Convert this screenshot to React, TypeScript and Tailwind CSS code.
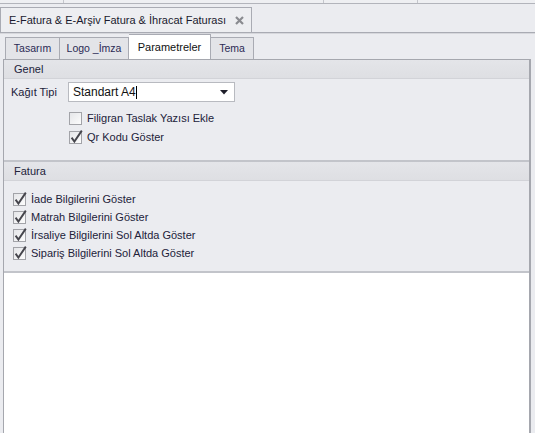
import React from "react";

function Check({ checked }: { checked?: boolean }) {
    return (
        <svg width="15" height="15" viewBox="0 0 15 15" className="shrink-0">
            <defs>
                <linearGradient id="cbg" x1="0" y1="0" x2="1" y2="1">
                    <stop offset="0" stopColor="#e4e5e8" />
                    <stop offset="1" stopColor="#fdfdfd" />
                </linearGradient>
            </defs>
            <rect x="0.5" y="1.5" width="12" height="12" fill="url(#cbg)" stroke="#a2a3a8" />
            {checked && (
                <path d="M2.6 7.6 L5.4 11.6 L12.8 0.6" fill="none" stroke="#45454c" strokeWidth="1.9" strokeLinejoin="miter" />
            )}
        </svg>
    );
}

function Row({ label, checked }: { label: string; checked?: boolean }) {
    return (
        <div className="flex items-center gap-[3px] h-[18px]">
            <Check checked={checked} />
            <span>{label}</span>
        </div>
    );
}

function GroupHeader({ title }: { title: string }) {
    return (
        <div className="h-[19px] flex items-center pl-[10px] bg-gradient-to-b from-[#e4e5e9] to-[#dedfe3] border-b border-[#d2d3d8]">
            {title}
        </div>
    );
}

export default function App() {
    return (
        <div
            className="w-[535px] h-[433px] overflow-hidden bg-[#ebecf0] text-[11px] text-[#22223a] flex flex-col"
            style={{ fontFamily: '"Liberation Sans", Arial, sans-serif' }}
        >
            {/* top strip left over from the toolbar above */}
            <div className="h-[4px] flex border-b border-[#b2b4bb] bg-[#eeeff2] shrink-0">
                <div className="w-[64px] border-r border-[#c4c6cc]" />
                <div className="w-[260px] border-r border-[#c4c6cc]" />
                <div className="w-[94px] border-r border-[#c4c6cc]" />
            </div>

            {/* document tab */}
            <div className="h-[29px] flex items-end border-b border-[#a9abb3] shrink-0">
                <div className="w-[252px] h-[25px] border border-b-0 border-[#a9abb3] bg-[#edeef1] flex items-center justify-between pl-[8px] pr-[7px]">
                    <span className="text-[#1a1a2e]">E-Fatura &amp; E-Arşiv Fatura &amp; İhracat Faturası</span>
                    <svg width="9" height="9" viewBox="0 0 9 9">
                        <path d="M1 1 L8 8 M8 1 L1 8" stroke="#8a8b90" strokeWidth="2.2" />
                    </svg>
                </div>
            </div>
            <div className="h-px bg-[#d6d7dc] shrink-0" />

            <div className="flex-1 flex flex-col pl-[3px] pr-[4px]">
                {/* inner tabs */}
                <div className="h-[25px] flex items-end pl-[2px] shrink-0">
                    <div className="h-[22px] w-[55px] border border-b-0 border-[#a9abb3] bg-[#e3e4e8] flex items-center justify-center text-[10.5px] text-[#2b2b55]">
                        Tasarım
                    </div>
                    <div className="h-[22px] w-[69px] border border-b-0 border-l-0 border-[#a9abb3] bg-[#e3e4e8] flex items-center justify-center text-[10.5px] text-[#2b2b55]">
                        Logo _İmza
                    </div>
                    <div className="h-[25px] w-[82px] border border-b-0 border-l-0 border-[#a9abb3] bg-white flex items-center justify-center text-[11px] text-[#111]">
                        Parametreler
                    </div>
                    <div className="h-[22px] w-[43px] border border-b-0 border-l-0 border-[#a9abb3] bg-[#e3e4e8] flex items-center justify-center text-[10.5px] text-[#2b2b55]">
                        Tema
                    </div>
                </div>

                {/* panel */}
                <div className="flex-1 bg-white border-l border-r-2 border-t border-[#a5a7ae] flex flex-col">
                    {/* Genel */}
                    <div className="h-[102px] bg-[#ebecf0] border-b-2 border-[#c2c4ca] flex flex-col">
                        <GroupHeader title="Genel" />
                        <div className="flex items-center mt-[3px] pl-[7px]">
                            <span className="w-[57px]">Kağıt Tipi</span>
                            <div className="w-[167px] h-[20px] bg-white border border-[#b8bac0] flex items-center justify-between pl-[4px] pr-[6px] text-[12px] text-[#111]">
                                <span>
                                    Standart A4<span className="inline-block w-px h-[13px] bg-black align-middle" />
                                </span>
                                <svg width="8" height="5" viewBox="0 0 8 5">
                                    <path d="M0 0 H8 L4 4.5 Z" fill="#1e1e2a" />
                                </svg>
                            </div>
                        </div>
                        <div className="flex flex-col pl-[65px] mt-[7px]">
                            <Row label="Filigran Taslak Yazısı Ekle" />
                            <div className="h-px" />
                            <Row label="Qr Kodu Göster" checked />
                        </div>
                    </div>

                    {/* Fatura */}
                    <div className="h-[111px] bg-[#ebecf0] border-b-2 border-[#c2c4ca] flex flex-col">
                        <GroupHeader title="Fatura" />
                        <div className="flex flex-col pl-[9px] mt-[9px]">
                            <Row label="İade Bilgilerini Göster" checked />
                            <Row label="Matrah Bilgilerini Göster" checked />
                            <Row label="İrsaliye Bilgilerini Sol Altda Göster" checked />
                            <Row label="Sipariş Bilgilerini Sol Altda Göster" checked />
                        </div>
                    </div>
                </div>
            </div>
        </div>
    );
}
